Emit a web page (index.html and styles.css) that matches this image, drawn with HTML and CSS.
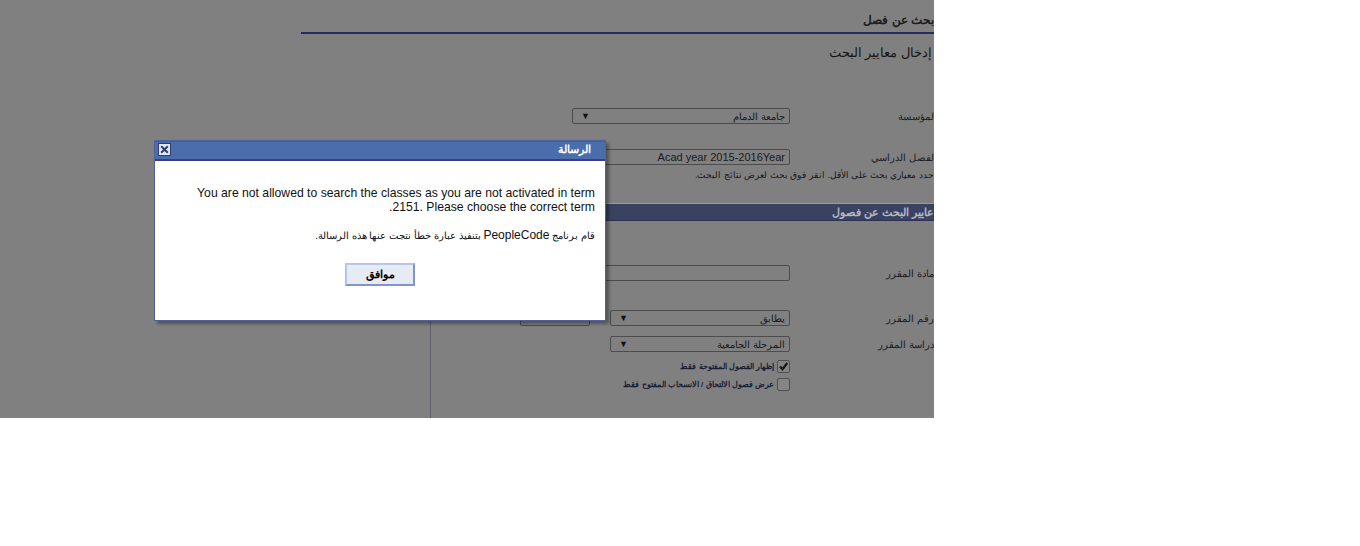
FILE: index.html
```html
<!DOCTYPE html>
<html lang="ar">
<head>
    <meta charset="UTF-8">
    <title>بحث عن فصل</title>
    <link rel="stylesheet" href="styles.css">
</head>
<body>
    <div class="frame">
        <!-- Page under the message overlay -->
        <div class="page">
            <h1 class="page-title">بحث عن فصل</h1>
            <h2 class="subtitle">إدخال معايير البحث</h2>

            <div class="form-row row-institution">
                <span class="field-label">لمؤسسة</span>
                <div class="field">
                    <span class="select wide"><span class="select-value">جامعة الدمام</span><span class="select-arrow">▼</span></span>
                </div>
            </div>
            <div class="form-row row-term">
                <span class="field-label">لفصل الدراسي</span>
                <div class="field">
                    <span class="select wide"><span class="select-value term-value">Acad year 2015-2016Year</span></span>
                </div>
            </div>
            <p class="hint">حدد معياري بحث على الأقل. انقر فوق بحث لعرض نتائج البحث.</p>

            <div class="criteria">
                <div class="criteria-head">عايير البحث عن فصول</div>

                <div class="form-row row-subject">
                    <span class="field-label">مادة المقرر</span>
                    <div class="field">
                        <span class="input wide"></span>
                    </div>
                </div>
                <div class="form-row row-number">
                    <span class="field-label">رقم المقرر</span>
                    <div class="field">
                        <span class="select"><span class="select-value">يطابق</span><span class="select-arrow">▼</span></span>
                        <span class="input short"></span>
                    </div>
                </div>
                <div class="form-row row-career">
                    <span class="field-label">دراسة المقرر</span>
                    <div class="field">
                        <span class="select"><span class="select-value">المرحلة الجامعية</span><span class="select-arrow">▼</span></span>
                    </div>
                </div>
                <div class="form-row row-check-first">
                    <span></span>
                    <label class="check-item">
                        <span class="check-box">
                            <svg width="11" height="11" viewBox="0 0 11 11"><path d="M2 5.5 L4.5 8.2 L9.3 2" fill="none" stroke="#161616" stroke-width="2.2"/></svg>
                        </span>
                        <span>إظهار الفصول المفتوحة فقط</span>
                    </label>
                </div>
                <div class="form-row row-check-second">
                    <span></span>
                    <label class="check-item">
                        <span class="check-box"></span>
                        <span>عرض فصول الالتحاق / الانسحاب المفتوح فقط</span>
                    </label>
                </div>
            </div>
        </div>

        <!-- Message dialog -->
        <div class="msg-box">
            <div class="msg-titlebar">
                <span class="msg-close">
                    <svg width="13" height="13" viewBox="0 0 13 13">
                        <rect x="0.5" y="0.5" width="12" height="12" fill="#e3e7f1" stroke="#2e3d72"/>
                        <path d="M3.2 3.2 L9.8 9.8 M9.8 3.2 L3.2 9.8" stroke="#2e3d72" stroke-width="2"/>
                    </svg>
                </span>
                <span class="msg-title">الرسالة</span>
            </div>
            <div class="msg-body">
                <p class="msg-text">You are not allowed to search the classes as you are not activated in term 2151. Please choose the correct term.</p>
                <p class="msg-note">قام برنامج <span class="msg-code">PeopleCode</span> بتنفيذ عبارة خطأ نتجت عنها هذه الرسالة.</p>
                <button class="msg-ok">موافق</button>
            </div>
        </div>
    </div>
</body>
</html>
```

FILE: styles.css
```css
body {
    margin: 0;
    background: #ffffff;
    font-family: "Liberation Sans", Arial, sans-serif;
}

.frame {
    position: relative;
    width: 934px;
    height: 418px;
    overflow: hidden;
    background: #808080;
}

/* Page under the overlay */
.page {
    direction: rtl;
    color: #1c1c1c;
}

.page-title {
    width: 633px;
    margin: 0;
    padding: 12px 0 4px;
    font-size: 12px;
    line-height: 16px;
    font-weight: bold;
    border-bottom: 2px solid #262d5c;
}

.subtitle {
    margin: 10px 2px 0 0;
    font-size: 13px;
    line-height: 18px;
    font-weight: normal;
    color: #151515;
}

.form-row {
    display: grid;
    grid-template-columns: 144px 1fr;
    align-items: center;
    height: 16px;
}

.field-label {
    font-size: 10px;
    color: #1e1e1e;
}

.field {
    display: flex;
    align-items: center;
    gap: 20px;
}

.row-institution { margin-top: 46px; }
.row-term { margin-top: 25px; }
.row-subject { margin-top: 44px; }
.row-number { margin-top: 29px; }
.row-career { margin-top: 10px; }
.row-check-first { margin-top: 8px; height: 13px; }
.row-check-second { margin-top: 5px; height: 13px; }

.select,
.input {
    box-sizing: border-box;
    display: flex;
    align-items: center;
    justify-content: space-between;
    width: 180px;
    height: 16px;
    padding: 0 4px 0 8px;
    border: 1px solid #4c4c4c;
    border-radius: 2px;
}

.select.wide,
.input.wide {
    width: 218px;
}

.input.short {
    width: 70px;
}

.select-value {
    font-size: 10px;
    color: #1a1a1a;
}

.term-value {
    font-size: 11px;
}

.select-arrow {
    font-size: 9px;
    color: #111111;
}

.hint {
    margin: 3px 0 0;
    font-size: 9px;
    line-height: 14px;
    color: #161616;
}

/* Search criteria panel */
.criteria {
    box-sizing: border-box;
    width: 504px;
    height: 220px;
    margin-top: 21px;
    border-left: 1px solid #5e5e6c;
}

.criteria-head {
    height: 16px;
    border-top: 1px solid #9a9aa6;
    border-bottom: 1px solid #2c3150;
    background: #3a4262;
    color: #b3b7c4;
    font-size: 11px;
    font-weight: bold;
    line-height: 16px;
}

.check-item {
    display: flex;
    align-items: center;
    gap: 3px;
    font-size: 8px;
    font-weight: bold;
    color: #1b1e36;
}

.check-box {
    box-sizing: border-box;
    display: flex;
    align-items: center;
    justify-content: center;
    width: 13px;
    height: 13px;
    border: 1px solid #505050;
    border-radius: 2px;
    background: #858585;
}

/* Message dialog */
.msg-box {
    position: absolute;
    top: 140px;
    left: 154px;
    box-sizing: border-box;
    width: 452px;
    height: 181px;
    border: 1px solid #50609c;
    background: #ffffff;
    box-shadow: 3px 3px 3px rgba(0, 0, 0, 0.35);
}

.msg-titlebar {
    box-sizing: border-box;
    display: flex;
    justify-content: space-between;
    align-items: flex-start;
    height: 20px;
    padding: 1px 14px 0 3px;
    border-top: 1px solid #5656a2;
    border-bottom: 2px solid #3b3c8a;
    background: #4a6dab;
}

.msg-close {
    display: flex;
}

.msg-title {
    font-size: 11px;
    line-height: 12px;
    font-weight: bold;
    color: #ffffff;
}

.msg-body {
    direction: rtl;
    padding: 25px 10px 0;
}

.msg-text {
    max-width: 412px;
    margin: 0;
    font-size: 12.2px;
    line-height: 14px;
    color: #111111;
}

.msg-note {
    margin: 14px 0 0;
    font-size: 10px;
    line-height: 14px;
    color: #111111;
}

.msg-code {
    font-size: 12px;
}

.msg-ok {
    display: block;
    width: 70px;
    height: 23px;
    margin: 20px auto 0;
    padding: 0;
    border: 2px solid;
    border-color: #b4c6ea #7f96c8 #7f96c8 #b4c6ea;
    background: #e7ebf3;
    font-family: "Liberation Sans", Arial, sans-serif;
    font-size: 11px;
    font-weight: bold;
    color: #000000;
}
```
